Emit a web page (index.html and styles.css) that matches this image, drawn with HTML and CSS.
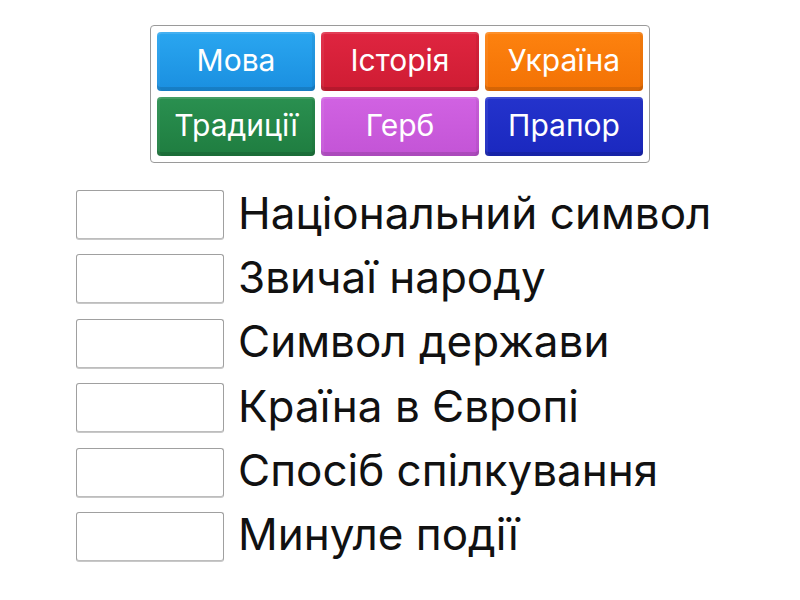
FILE: index.html
```html
<!DOCTYPE html>
<html lang="uk">
<head>
<meta charset="utf-8">
<link rel="stylesheet" href="styles.css">
</head>
<body>
<div class="page">
  <div class="bank">
    <div class="tile blue"><span>Мова</span></div>
    <div class="tile red"><span>Історія</span></div>
    <div class="tile orange"><span>Україна</span></div>
    <div class="tile green"><span>Традиції</span></div>
    <div class="tile purple"><span>Герб</span></div>
    <div class="tile navy"><span>Прапор</span></div>
  </div>
  <div class="rows">
    <div class="row"><div class="slot"></div><div class="label">Національний символ</div></div>
    <div class="row"><div class="slot"></div><div class="label">Звичаї народу</div></div>
    <div class="row"><div class="slot"></div><div class="label">Символ держави</div></div>
    <div class="row"><div class="slot"></div><div class="label">Країна в Європі</div></div>
    <div class="row"><div class="slot"></div><div class="label">Спосіб спілкування</div></div>
    <div class="row"><div class="slot"></div><div class="label">Минуле події</div></div>
  </div>
</div>
</body>
</html>
```
FILE: styles.css
```css
* { box-sizing: border-box; }
html, body { margin: 0; padding: 0; background: #fff; }
body { font-family: Inter, Roboto, sans-serif; color: #111; }
.page { width: 800px; height: 600px; padding-top: 25px; }
.bank {
  width: 500px;
  margin: 0 0 0 150px;
  border: 1px solid #9a9a9a;
  border-radius: 4px;
  padding: 6px;
  display: grid;
  grid-template-columns: repeat(3, 158px);
  grid-auto-rows: 59px;
  gap: 6px;
}
.tile {
  border-radius: 4px;
  display: flex;
  align-items: center;
  justify-content: center;
  color: #fff;
  font-size: 30px;
  box-shadow: inset 0 -4px 0 rgba(0,0,0,0.12), inset 0 2px 0 rgba(255,255,255,0.12), inset 3px 0 0 rgba(255,255,255,0.06), inset -3px 0 0 rgba(0,0,0,0.05);
}
.tile span { margin-top: -4px; }
.blue { background: linear-gradient(#2aa6f0, #1a8fe0); }
.red { background: linear-gradient(#df2540, #cf1c33); }
.orange { background: linear-gradient(#fd820f, #f37205); }
.green { background: linear-gradient(#2a9050, #1f7d40); }
.purple { background: linear-gradient(#d162e2, #c354d6); }
.navy { background: linear-gradient(#2433cc, #1a28bf); }
.rows {
  margin: 27px 0 0 76px;
  display: flex;
  flex-direction: column;
  gap: 15.4px;
}
.row { display: flex; align-items: center; height: 49px; }
.slot {
  width: 148px;
  height: 49px;
  border: 1px solid #a0a0a0;
  border-bottom-color: #bdbdbd;
  border-radius: 3px;
  box-shadow: 0 1px 0 #c8c8c8;
  background: #fff;
  flex: none;
}
.label { margin-left: 14px; font-size: 44px; line-height: 1; white-space: nowrap; margin-top: -4px; }
```
